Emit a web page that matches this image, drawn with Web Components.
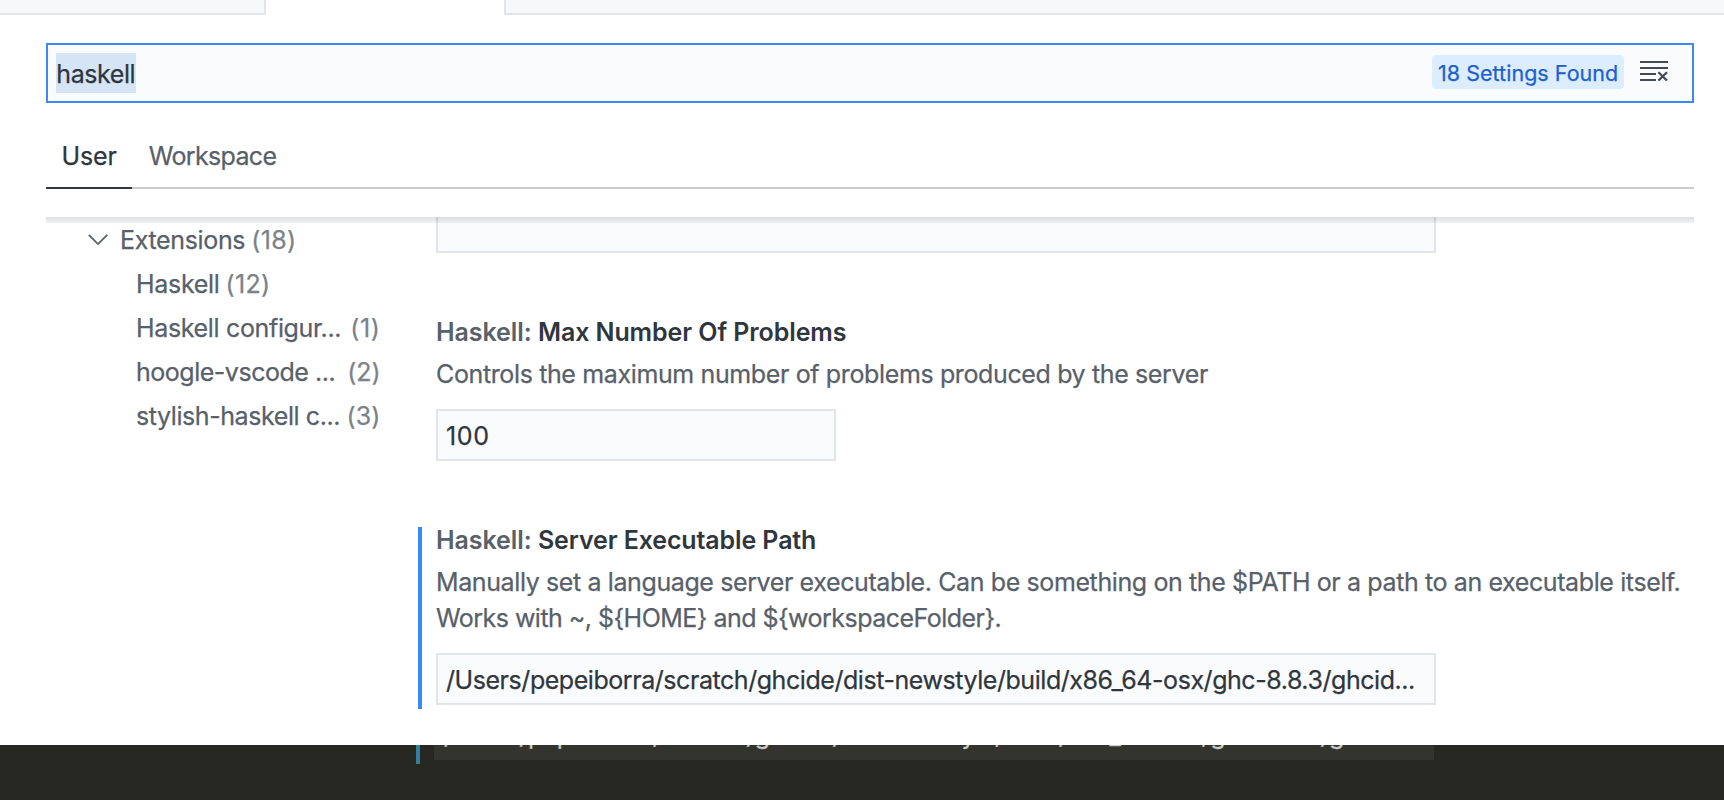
<!DOCTYPE html>
<html lang="en">
<head>
<meta charset="utf-8">
<title>Settings</title>
<style>
html,body{margin:0;height:100%;overflow:hidden;background:#272822}
body{font:400 25px/36px Inter,"Liberation Sans",sans-serif;letter-spacing:-.39px;color:#2f363d;-webkit-text-stroke:.25px}
</style>
</head>
<body>
<settings-editor>
  <editor-tabs slot="tabs"></editor-tabs>
  <settings-search slot="search" count="18 Settings Found">haskell</settings-search>
  <scope-tabs slot="scope"></scope-tabs>
  <settings-tree slot="tree">
    <tree-row group count="(18)" style="letter-spacing:-.35px;--count-ls:.4px">Extensions</tree-row>
    <tree-row count="(12)" style="letter-spacing:-.3px;--count-ls:.3px">Haskell</tree-row>
    <tree-row wide count="(1)" style="letter-spacing:-.34px;--count-ls:.6px">Haskell configur...</tree-row>
    <tree-row wide count="(2)" style="letter-spacing:-.48px;--count-ls:-.08px">hoogle-vscode ...</tree-row>
    <tree-row wide count="(3)" style="letter-spacing:-.42px;--count-ls:.12px">stylish-haskell c...</tree-row>
  </settings-tree>
  <text-box slot="items" style="height:36px;border-top:0"></text-box>
  <setting-item slot="items" name="Max Number Of Problems" style="--name-ls:-.09px">
    <span style="letter-spacing:-.37px">Controls the maximum number of problems produced by the server</span>
    <text-box slot="control" style="width:400px;letter-spacing:.6px">100</text-box>
  </setting-item>
  <setting-item slot="items" modified name="Server Executable Path" style="--name-ls:-.12px">
    <span style="letter-spacing:-.389px">Manually set a language server executable. Can be something on the $PATH or a path to an executable itself.</span><br>
    <span style="letter-spacing:-.53px">Works with ~, ${HOME} and ${workspaceFolder}.</span>
    <text-box slot="control" style="letter-spacing:-.446px">/Users/pepeiborra/scratch/ghcide/dist-newstyle/build/x86_64-osx/ghc-8.8.3/ghcid...</text-box>
  </setting-item>
</settings-editor>
<dark-strip>/Users/pepeiborra/scratch/ghcide/dist-newstyle/build/x86_64-osx/ghc-8.8.3/ghcide</dark-strip>

<script>
function define(name, html) {
  const template = document.createElement('template');
  template.innerHTML = html;
  customElements.define(name, class extends HTMLElement {
    constructor() {
      super();
      this.attachShadow({ mode: 'open' }).append(template.content.cloneNode(true));
    }
    connectedCallback() {
      this.shadowRoot.querySelectorAll('[data-attr]').forEach(el => {
        el.textContent = this.getAttribute(el.dataset.attr);
      });
    }
  });
}

define('settings-editor', `
<style>
:host{display:flex;flex-direction:column;height:745px;background:#fff;overflow:hidden}
.head{padding:28px 30px 0 46px;height:174px}
.body{position:relative;flex:1;display:grid;grid-template-columns:390px 1fr;margin:0 30px 0 46px;min-height:0}
.shade{position:absolute;inset:0 0 auto 0;height:6px;background:linear-gradient(rgba(55,65,70,.16),rgba(55,65,70,.07))}
.items{display:flex;flex-direction:column;gap:61px}
</style>
<slot name="tabs"></slot>
<div class="head"><slot name="search"></slot><slot name="scope"></slot></div>
<div class="body"><slot name="tree"></slot><div class="items"><slot name="items"></slot></div><div class="shade"></div></div>`);

define('editor-tabs', `
<style>
:host{display:flex;height:15px}
div{box-sizing:border-box;background:#f6f8fa;border-bottom:2px solid #e1e4e8}
.l{width:266px;height:15px;border-right:2px solid #e1e4e8}
.m{width:238px;background:#fff;border:0}
.r{flex:1;border-left:2px solid #e1e4e8}
</style><div class="l"></div><div class="m"></div><div class="r"></div>`);

define('settings-search', `
<style>
:host{display:flex;align-items:flex-start;box-sizing:border-box;height:60px;border:2px solid #3b88f7;background:#fafbfc;padding:8px 24px 0 8px;letter-spacing:-.42px}
.q{width:80px;height:40px;line-height:43px;background:#d5e5f6;text-indent:.3px;white-space:nowrap}
.n{box-sizing:border-box;width:192px;height:34px;margin:2px 16px 0 auto;padding-left:6px;border-radius:4px;background:#dbedff;color:#1f60cc;font-size:21.5px;line-height:37px;letter-spacing:.03px;white-space:nowrap}
svg{display:block;margin-top:4px;flex:none}
</style>
<div class="q"><slot></slot></div><div class="n" data-attr="count"></div>
<svg width="28" height="24" viewBox="0 0 28 24" fill="none" stroke="#424a53" stroke-width="2"><path d="M0 5H28M0 11H28M0 17H16M0 23H16"/><path d="M18.4 15.2L27 23.6M27 15.2L18.4 23.6" stroke-width="2.2"/></svg>`);

define('scope-tabs', `
<style>
:host{display:flex;box-sizing:border-box;height:62px;margin-top:24px;border-bottom:2px solid #ccc}
div{box-sizing:border-box;height:62px;padding-top:11px;color:#586069}
.u{width:86px;padding-left:15.6px;color:#2f363d;border-bottom:2px solid #2f363d;letter-spacing:-.15px}
.w{padding-left:16.7px;letter-spacing:-.65px}
</style><div class="u">User</div><div class="w">Workspace</div>`);

define('settings-tree', `<style>:host{display:block}</style><slot></slot>`);

define('tree-row', `
<style>
:host{display:flex;box-sizing:border-box;height:44px;padding:0 55px 0 90px;line-height:46px;color:#586069;white-space:nowrap}
:host([group]){padding-left:42px}
svg{display:none;margin:17px 12px 0 0;flex:none}
:host([group]) svg{display:block}
.c{margin-left:6px;color:#7b8288;letter-spacing:var(--count-ls,.6px)}
:host([wide]) .c{margin-left:auto;margin-right:.5px}
</style>
<svg width="20" height="12" viewBox="0 0 20 12" fill="none" stroke="#586069" stroke-width="1.8"><path d="M.8 .9L10 10.1L19.2 .9"/></svg>
<span><slot></slot></span><span class="c" data-attr="count"></span>`);

define('text-box', `
<style>
:host{display:block;box-sizing:border-box;width:1000px;height:52px;border:2px solid #e1e4e8;background:#fafbfc;padding:1px 8px 0;line-height:48px;color:#2f363d;white-space:nowrap;overflow:hidden}
</style><slot></slot>`);

define('setting-item', `
<style>
:host{display:block;position:relative}
:host([modified])::before{content:"";position:absolute;left:-18px;top:5px;bottom:-4px;width:4px;background:#3b88f7}
.t{font-weight:600;color:#586069;letter-spacing:-.07px;white-space:nowrap;-webkit-text-stroke:0}
b{font-weight:600;color:#2f363d;letter-spacing:var(--name-ls)}
.d{margin:6px 0 17px;color:#586069;white-space:nowrap}
</style>
<div class="t">Haskell: <b data-attr="name"></b></div>
<div class="d"><slot></slot></div>
<slot name="control"></slot>`);

define('dark-strip', `
<style>
:host{display:flex;height:55px;padding-left:416px;background:#272822}
i{width:4px;height:19px;background:#367e9f;margin-right:14px}
.b{width:1000px;height:15px;background:#33342e;overflow:hidden}
.b div{margin:-28px 0 0 10px;color:#cbcbc6;letter-spacing:-.446px;white-space:nowrap}
</style><i></i><div class="b"><div><slot></slot></div></div>`);
</script>
</body>
</html>
